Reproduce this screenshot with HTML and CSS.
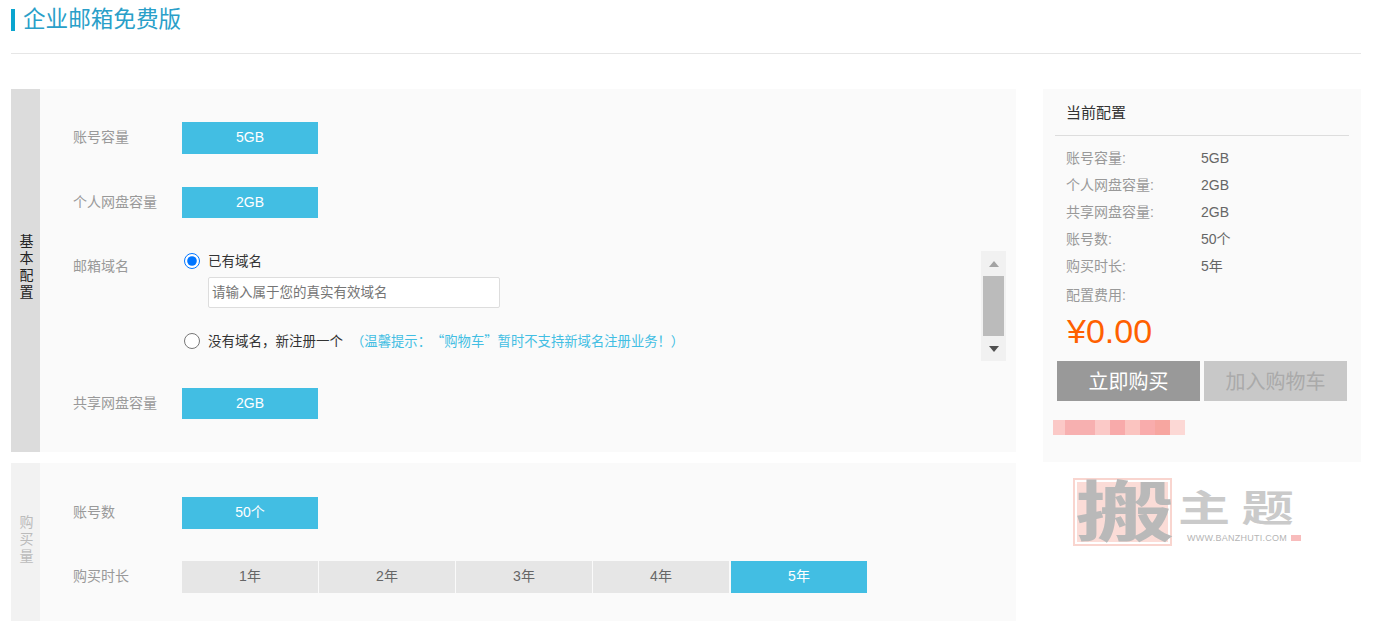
FILE: index.html
```html
<!DOCTYPE html>
<html lang="zh-CN">
<head>
    <meta charset="UTF-8">
    <meta name="viewport" content="width=device-width, initial-scale=1.0">
    <title>企业邮箱免费版</title>
    <link rel="stylesheet" href="styles.css">
</head>
<body>

    <div class="page">
        <div class="page-head">
            <h1 class="page-title">企业邮箱免费版</h1>
        </div>

        <div class="main">
            <div class="config">
                <div class="panel panel-base">
                    <div class="panel-side">基本配置</div>
                    <div class="panel-body">
                        <div class="row">
                            <div class="row-label">账号容量</div>
                            <div class="opt opt-active">5GB</div>
                        </div>
                        <div class="row row-short">
                            <div class="row-label">个人网盘容量</div>
                            <div class="opt opt-active">2GB</div>
                        </div>
                        <div class="row row-domain">
                            <div class="row-label row-label-top">邮箱域名</div>
                            <div class="domain">
                                <label class="radio-line">
                                    <input type="radio" name="domain" checked>
                                    <span>已有域名</span>
                                </label>
                                <input class="domain-input" type="text" placeholder="请输入属于您的真实有效域名">
                                <label class="radio-line radio-line-second">
                                    <input type="radio" name="domain">
                                    <span>没有域名，新注册一个</span>
                                    <span class="tip">（温馨提示：“购物车”暂时不支持新域名注册业务！）</span>
                                </label>
                            </div>
                            <div class="scrollbar">
                                <div class="scroll-btn"><i class="arrow-up"></i></div>
                                <div class="scroll-thumb"></div>
                                <div class="scroll-btn"><i class="arrow-down"></i></div>
                            </div>
                        </div>
                        <div class="row row-short">
                            <div class="row-label">共享网盘容量</div>
                            <div class="opt opt-active">2GB</div>
                        </div>
                    </div>
                </div>

                <div class="panel panel-buy">
                    <div class="panel-side panel-side-light">购买量</div>
                    <div class="panel-body panel-body-buy">
                        <div class="row">
                            <div class="row-label">账号数</div>
                            <div class="opt opt-active">50个</div>
                        </div>
                        <div class="row">
                            <div class="row-label">购买时长</div>
                            <div class="opt-group">
                                <div class="opt">1年</div>
                                <div class="opt">2年</div>
                                <div class="opt">3年</div>
                                <div class="opt">4年</div>
                                <div class="opt opt-active opt-last">5年</div>
                            </div>
                        </div>
                    </div>
                </div>
            </div>

            <div class="aside">
                <div class="summary">
                    <div class="summary-title">当前配置</div>
                    <div class="summary-list">
                        <div class="summary-row"><span class="summary-key">账号容量:</span><span>5GB</span></div>
                        <div class="summary-row"><span class="summary-key">个人网盘容量:</span><span>2GB</span></div>
                        <div class="summary-row"><span class="summary-key">共享网盘容量:</span><span>2GB</span></div>
                        <div class="summary-row"><span class="summary-key">账号数:</span><span>50个</span></div>
                        <div class="summary-row"><span class="summary-key">购买时长:</span><span>5年</span></div>
                    </div>
                    <div class="fee-label">配置费用:</div>
                    <div class="fee">¥0.00</div>
                    <div class="actions">
                        <div class="btn btn-buy">立即购买</div>
                        <div class="btn btn-cart">加入购物车</div>
                    </div>
                    <div class="smudge">
                        <i class="s1"></i><i class="s2"></i><i class="s3"></i><i class="s4"></i><i class="s5"></i><i class="s6"></i><i class="s7"></i><i class="s8"></i>
                    </div>
                </div>

                <div class="brand">
                    <div class="brand-stamp"><span class="brand-glyph">搬</span></div>
                    <div class="brand-text">
                        <div class="brand-name">主题</div>
                        <div class="brand-url">WWW.BANZHUTI.COM<i class="brand-dot"></i></div>
                    </div>
                </div>
            </div>
        </div>
    </div>

</body>
</html>
```

FILE: styles.css
```css
html, body {
    margin: 0;
    height: 621px;
    overflow: hidden;
    background-color: #fff;
}

body {
    font-family: "Liberation Sans", "Noto Sans CJK SC", sans-serif;
    font-size: 14px;
    color: #666;
}

.page {
    padding: 0 24px 0 11px;
}

.page-head {
    height: 53px;
    border-bottom: 1px solid #e6e6e6;
}

.page-title {
    margin: 0;
    position: relative;
    top: 9px;
    padding-left: 8px;
    border-left: 4px solid #0ba5cf;
    height: 22px;
    line-height: 22px;
    font-size: 22.6px;
    font-weight: normal;
    color: #2a9fc9;
}

.main {
    display: flex;
    gap: 27px;
    margin-top: 35px;
}

.config {
    width: 1005px;
}

.panel {
    display: flex;
    background-color: #fafafa;
}

.panel-buy {
    margin-top: 11px;
}

.panel-side {
    width: 29px;
    flex: none;
    display: flex;
    align-items: center;
    justify-content: center;
    box-sizing: border-box;
    padding: 0 6px 7px 8px;
    background-color: #dcdcdc;
    color: #222;
    line-height: 17px;
    text-align: center;
}

.panel-side-light {
    background-color: #f2f2f2;
    color: #bbb;
    padding-bottom: 9px;
}

.panel-body {
    flex: 1;
    padding: 33px 10px 0 33px;
}

.panel-body-buy {
    padding-top: 34px;
}

.row {
    display: flex;
    align-items: center;
    margin-bottom: 32px;
}

.panel-base .row {
    margin-bottom: 33px;
}

.panel-base .row-domain {
    align-items: flex-start;
    margin-bottom: 27px;
}

.row-label {
    width: 109px;
    flex: none;
    padding-bottom: 4px;
    color: #999;
}

.row-label-top {
    margin-top: 4px;
}

.opt {
    width: 136px;
    height: 32px;
    line-height: 31px;
    text-align: center;
    background-color: #e6e6e6;
    color: #666;
}

.row-short .opt {
    height: 31px;
}

.opt-active {
    background-color: #42bee3;
    color: #fff;
}

.opt-group {
    display: flex;
    gap: 1px;
}

.opt-last {
    margin-left: 1px;
}

.domain {
    flex: 1;
}

.radio-line {
    display: flex;
    align-items: center;
    height: 20px;
    font-size: 13.5px;
    color: #333;
}

.radio-line input {
    width: 16px;
    height: 16px;
    margin: 0 8px 0 2px;
}

.radio-line span {
    padding-bottom: 2px;
}

.radio-line-second {
    margin-top: 23px;
}

.tip {
    margin-left: 8px;
    font-family: "Noto Sans CJK SC", sans-serif;
    font-size: 13.33px;
    text-spacing-trim: space-all;
    color: #42bee3;
}

.domain-input {
    display: block;
    box-sizing: border-box;
    width: 292px;
    height: 31px;
    margin: 6px 0 0 26px;
    padding: 0 3px;
    border: 1px solid #ddd;
    border-radius: 2px;
    background-color: #fff;
    font-family: inherit;
    font-size: 13.5px;
}

.domain-input::placeholder {
    color: #757575;
}

.scrollbar {
    width: 25px;
    height: 110px;
    flex: none;
    box-sizing: border-box;
    padding: 0 2px;
    background-color: #f1f1f1;
}

.scroll-btn {
    height: 25px;
    display: flex;
    align-items: center;
    justify-content: center;
}

.scroll-thumb {
    height: 60px;
    background-color: #bbb;
}

.arrow-up {
    border: 5px solid transparent;
    border-top: 0;
    border-bottom: 6px solid #a3a3a3;
}

.arrow-down {
    border: 5px solid transparent;
    border-bottom: 0;
    border-top: 6px solid #505050;
}

.aside {
    width: 318px;
}

.summary {
    height: 373px;
    box-sizing: border-box;
    padding: 0 12px;
    background-color: #fafafa;
}

.summary-title {
    height: 46px;
    line-height: 47px;
    padding-left: 11px;
    border-bottom: 1px solid #ddd;
    font-size: 15px;
    color: #333;
}

.summary-list {
    padding: 9px 0 0 11px;
}

.summary-row {
    display: flex;
    height: 27px;
    line-height: 27px;
}

.summary-key {
    width: 135px;
    color: #999;
}

.fee-label {
    margin: 2px 0 0 11px;
    line-height: 27px;
    color: #999;
}

.fee {
    margin-left: 12px;
    height: 47px;
    line-height: 44px;
    font-size: 34px;
    color: #ff6000;
}

.actions {
    display: flex;
    gap: 4px;
    margin: 5px 0 0 2px;
}

.btn {
    width: 143px;
    height: 40px;
    line-height: 42px;
    text-align: center;
    font-size: 20px;
}

.btn-buy {
    background-color: #999;
    color: #fff;
}

.btn-cart {
    background-color: #c8c8c8;
    color: #aaa;
}

.smudge {
    display: flex;
    height: 15px;
    margin: 19px 0 0 -2px;
}

.smudge i {
    display: block;
    background-color: #f9b5b5;
}

.smudge .s1 { width: 12px; background-color: #fbc9c7; }
.smudge .s2 { width: 30px; background-color: #f7b0b0; }
.smudge .s3 { width: 15px; background-color: #fbc9c7; }
.smudge .s4 { width: 15px; background-color: #f8aaaa; }
.smudge .s5 { width: 15px; background-color: #fbc4c0; }
.smudge .s6 { width: 15px; background-color: #f9acac; }
.smudge .s7 { width: 15px; background-color: #f7a6a0; }
.smudge .s8 { width: 15px; background-color: #fcd8d5; }

.brand {
    display: flex;
    margin: 16px 0 0 30px;
}

.brand-stamp {
    width: 95px;
    height: 64px;
    border: 2px solid #f9d5cf;
    box-shadow: inset 0 0 0 2px #fff;
    background-color: #fbdcd7;
    text-align: center;
}

.brand-glyph {
    display: inline-block;
    line-height: 66px;
    font-size: 72px;
    font-weight: bold;
    color: #b9b9b9;
    transform: translateX(3px) scale(1.38, 0.92);
}

.brand-text {
    margin-left: 6px;
}

.brand-name {
    margin-top: 13px;
    height: 38px;
    line-height: 38px;
    font-size: 37px;
    font-weight: bold;
    letter-spacing: 8px;
    color: #cacaca;
    transform: scaleX(1.41);
    transform-origin: left center;
}

.brand-url {
    display: flex;
    align-items: center;
    margin: 4px 0 0 9px;
    font-size: 9px;
    letter-spacing: 0.25px;
    color: #b5b5b5;
}

.brand-dot {
    width: 10px;
    height: 6px;
    margin-left: 4px;
    background-color: #f8bcbc;
}
```
